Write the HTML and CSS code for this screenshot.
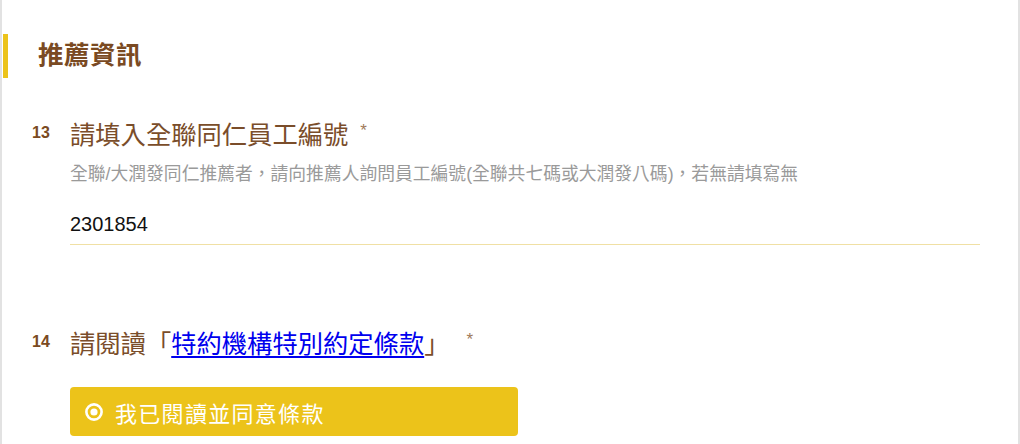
FILE: index.html
```html
<!DOCTYPE html>
<html lang="zh-Hant">
<head>
<meta charset="utf-8">
<title>推薦資訊</title>
<link rel="stylesheet" href="styles.css">
</head>
<body>
<div class="page">
  <h2 class="section-title">推薦資訊</h2>

  <div class="question q13">
    <div class="q-head">
      <span class="q-num">13</span>
      <span class="q-text">請填入全聯同仁員工編號</span>
      <span class="q-star">*</span>
    </div>
    <div class="q-desc">全聯/大潤發同仁推薦者，請向推薦人詢問員工編號(全聯共七碼或大潤發八碼)，若無請填寫無</div>
    <div class="q-input">2301854</div>
  </div>

  <div class="question q14">
    <div class="q-head">
      <span class="q-num">14</span>
      <span class="q-text">請閱讀「<a href="#" class="q-link">特約機構特別約定條款</a>」</span>
      <span class="q-star star-wide">*</span>
    </div>
    <div class="choice">
      <svg class="radio" width="18" height="18" viewBox="0 0 18 18" aria-hidden="true">
        <circle cx="9" cy="9" r="7.6" fill="none" stroke="#fff" stroke-width="2.6"/>
        <circle cx="9" cy="9" r="3.6" fill="#fff"/>
      </svg>
      <span class="choice-text">我已閱讀並同意條款</span>
    </div>
  </div>
</div>
</body>
</html>
```

FILE: styles.css
```css
html, body {
  margin: 0;
  padding: 0;
  background: #ffffff;
}

body {
  font-family: "Liberation Sans", "Noto Sans CJK TC", sans-serif;
  color: #333;
}

.page {
  box-sizing: border-box;
  min-height: 444px;
  border-left: 2px solid #e2e2e2;
  border-right: 2px solid #e2e2e2;
  padding-top: 34px;
}

.section-title {
  box-sizing: border-box;
  margin: 0 0 0 1px;
  height: 44px;
  border-left: 5px solid #ecc31a;
  padding-left: 30px;
  padding-bottom: 7px;
  display: flex;
  align-items: center;
  font-size: 25.5px;
  font-weight: 700;
  color: #7a4a22;
  letter-spacing: 0.5px;
}

.question {
  padding-left: 30px;
}

.q13 {
  margin-top: 39px;
}

.q14 {
  margin-top: 81px;
}

.q-head {
  display: flex;
  align-items: center;
  height: 36px;
}

.q-num {
  width: 38px;
  flex: none;
  font-size: 16px;
  font-weight: 700;
  color: #7a4a22;
  position: relative;
  top: -2px;
}

.q-text {
  font-size: 25.3px;
  line-height: 36px;
  color: #7a4d2a;
}

.q-link {
  color: #0000ee;
  text-decoration: underline;
  text-underline-offset: 3px;
  text-decoration-thickness: 2px;
}

.q-star {
  align-self: flex-start;
  margin-left: 12px;
  margin-top: 5px;
  font-size: 17px;
  line-height: 17px;
  color: #a07a5a;
}

.star-wide {
  margin-left: 17px;
}

.q-desc {
  margin: 9px 0 0 38px;
  font-size: 17.8px;
  line-height: 24px;
  color: #9a9a9a;
}

.q-input {
  box-sizing: border-box;
  margin: 18px 0 0 38px;
  width: 910px;
  height: 41px;
  display: flex;
  align-items: center;
  font-size: 20px;
  color: #111;
  border-bottom: 1px solid #f0e0a4;
}

.choice {
  box-sizing: border-box;
  margin: 25px 0 0 38px;
  width: 448px;
  height: 49px;
  background: #ecc31a;
  border-radius: 4px;
  display: flex;
  align-items: center;
  padding-left: 15px;
  gap: 12px;
}

.radio {
  flex: none;
}

.choice-text {
  font-size: 22px;
  letter-spacing: 1.3px;
  color: #ffffff;
  font-weight: 400;
}
```
